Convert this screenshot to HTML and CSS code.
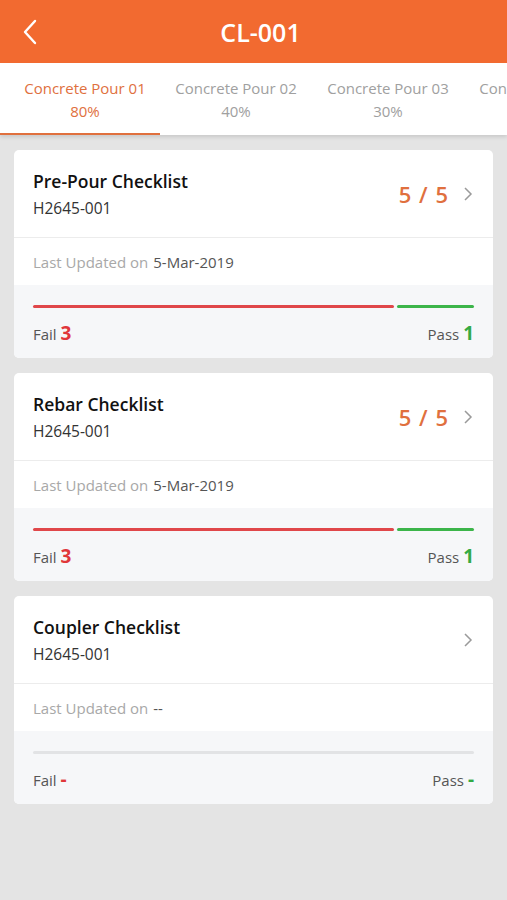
FILE: index.html
```html
<!DOCTYPE html>
<html lang="en">
<head>
  <meta charset="UTF-8">
  <meta name="viewport" content="width=device-width, initial-scale=1.0">
  <title>CL-001</title>
  <link rel="stylesheet" href="styles.css">
</head>
<body>
  <header class="topbar">
    <svg class="back" width="16" height="26" viewBox="0 0 16 26"><path d="M13 2 L3 13 L13 24" fill="none" stroke="#fff" stroke-width="2.4" stroke-linecap="round" stroke-linejoin="round"/></svg>
    <div class="title">CL-001</div>
  </header>

  <nav class="tabs">
    <div class="tab active">Concrete Pour 01<br>80%</div>
    <div class="tab">Concrete Pour 02<br>40%</div>
    <div class="tab">Concrete Pour 03<br>30%</div>
    <div class="tab">Concrete Pour 04<br>10%</div>
  </nav>

  <main class="list">
    <div class="card">
      <div class="card-top">
        <div>
          <div class="card-title">Pre-Pour Checklist</div>
          <div class="card-code">H2645-001</div>
        </div>
        <div class="card-right">
          <span class="count">5 / 5</span>
          <svg class="chev" width="10" height="16" viewBox="0 0 10 16"><path d="M2 2 L8 8 L2 14" fill="none" stroke="#9a9a9a" stroke-width="1.5"/></svg>
        </div>
      </div>
      <div class="card-mid">Last Updated on <span class="date">5-Mar-2019</span></div>
      <div class="card-bottom">
        <div class="bar">
          <div class="bar-fail" style="flex: 362"></div>
          <div class="bar-pass" style="flex: 77"></div>
        </div>
        <div class="stats">
          <span>Fail <b class="fail">3</b></span>
          <span>Pass <b class="pass">1</b></span>
        </div>
      </div>
    </div>

    <div class="card">
      <div class="card-top">
        <div>
          <div class="card-title">Rebar Checklist</div>
          <div class="card-code">H2645-001</div>
        </div>
        <div class="card-right">
          <span class="count">5 / 5</span>
          <svg class="chev" width="10" height="16" viewBox="0 0 10 16"><path d="M2 2 L8 8 L2 14" fill="none" stroke="#9a9a9a" stroke-width="1.5"/></svg>
        </div>
      </div>
      <div class="card-mid">Last Updated on <span class="date">5-Mar-2019</span></div>
      <div class="card-bottom">
        <div class="bar">
          <div class="bar-fail" style="flex: 362"></div>
          <div class="bar-pass" style="flex: 77"></div>
        </div>
        <div class="stats">
          <span>Fail <b class="fail">3</b></span>
          <span>Pass <b class="pass">1</b></span>
        </div>
      </div>
    </div>

    <div class="card">
      <div class="card-top">
        <div>
          <div class="card-title">Coupler Checklist</div>
          <div class="card-code">H2645-001</div>
        </div>
        <div class="card-right">
          <svg class="chev" width="10" height="16" viewBox="0 0 10 16"><path d="M2 2 L8 8 L2 14" fill="none" stroke="#9a9a9a" stroke-width="1.5"/></svg>
        </div>
      </div>
      <div class="card-mid">Last Updated on <span class="date">--</span></div>
      <div class="card-bottom">
        <div class="bar">
          <div class="bar-empty"></div>
        </div>
        <div class="stats">
          <span>Fail <b class="fail">-</b></span>
          <span>Pass <b class="pass">-</b></span>
        </div>
      </div>
    </div>
  </main>
</body>
</html>
```

FILE: styles.css
```css
body {
  margin: 0;
  font-family: 'Open Sans', 'Noto Sans', sans-serif;
  background-color: #e4e4e4;
  color: #222;
  width: 507px;
  height: 900px;
  overflow: hidden;
}
.topbar {
  background-color: #f26a30;
  height: 63px;
  display: flex;
  align-items: center;
  justify-content: center;
  position: relative;
}
.back {
  position: absolute;
  left: 22px;
  top: 19px;
}
.title {
  color: #fff;
  font-size: 25px;
  font-weight: 600;
  padding-left: 14px;
}
.tabs {
  background-color: #fff;
  height: 72px;
  display: flex;
  overflow: hidden;
  box-shadow: 0 2px 4px rgba(0,0,0,0.12);
}
.tab {
  flex: 0 0 152px;
  box-sizing: border-box;
  padding-top: 14px;
  text-align: center;
  font-size: 15px;
  line-height: 23px;
  color: #a0a0a0;
  white-space: nowrap;
}
.tab.active {
  flex-basis: 160px;
  padding-left: 10px;
  color: #e0703e;
  border-bottom: 2px solid #e0703e;
}
.list {
  padding: 15px 14px;
  display: flex;
  flex-direction: column;
  gap: 15px;
}
.card {
  background-color: #fff;
  border-radius: 5px;
  overflow: hidden;
}
.card-top {
  height: 87px;
  padding: 0 20px 0 19px;
  display: flex;
  align-items: center;
  justify-content: space-between;
  border-bottom: 1px solid #ececec;
}
.card-title {
  font-size: 17.5px;
  font-weight: 600;
  color: #111;
  line-height: 27px;
  margin-top: 2px;
}
.card-code {
  font-size: 15.5px;
  color: #333;
  line-height: 26px;
}
.card-right {
  display: flex;
  align-items: center;
  gap: 14px;
}
.count {
  color: #e0703e;
  font-size: 22px;
  font-weight: 600;
  letter-spacing: 1px;
}
.card-mid {
  height: 47px;
  padding-left: 19px;
  display: flex;
  align-items: center;
  font-size: 15px;
  color: #a8a8a8;
}
.card-mid .date {
  color: #555;
  margin-left: 5px;
}
.card-bottom {
  background-color: #f6f7f9;
  padding: 20px 19px 0 19px;
  height: 53px;
}
.bar {
  display: flex;
  gap: 3px;
  height: 3px;
}
.bar-fail {
  background-color: #e0474a;
  border-radius: 2px;
}
.bar-pass {
  background-color: #3cb54a;
  border-radius: 2px;
}
.bar-empty {
  flex: 1;
  background-color: #e2e3e5;
  border-radius: 2px;
}
.stats {
  display: flex;
  justify-content: space-between;
  margin-top: 12px;
  font-size: 15px;
  color: #555;
}
.stats b {
  font-size: 19px;
  font-weight: 700;
}
.fail {
  color: #e0373a;
}
.pass {
  color: #33aa44;
}
```
